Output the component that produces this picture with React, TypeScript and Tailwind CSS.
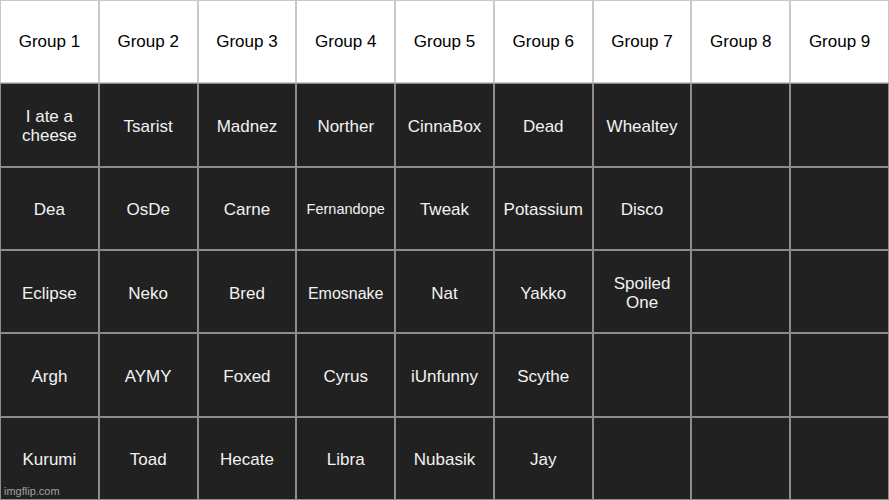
const HEADERS = ["Group 1", "Group 2", "Group 3", "Group 4", "Group 5", "Group 6", "Group 7", "Group 8", "Group 9"];

// cells per row, "" = empty
const ROWS: string[][] = [
  ["I ate a cheese", "Tsarist", "Madnez", "Norther", "CinnaBox", "Dead", "Whealtey", "", ""],
  ["Dea", "OsDe", "Carne", "Fernandope", "Tweak", "Potassium", "Disco", "", ""],
  ["Eclipse", "Neko", "Bred", "Emosnake", "Nat", "Yakko", "Spoiled One", "", ""],
  ["Argh", "AYMY", "Foxed", "Cyrus", "iUnfunny", "Scythe", "", "", ""],
  ["Kurumi", "Toad", "Hecate", "Libra", "Nubasik", "Jay", "", "", ""],
];

function sizeFor(name: string) {
  if (name === "Fernandope") return "text-[14.5px]";
  if (name === "Emosnake") return "text-[16px]";
  return "text-[17px]";
}

export default function App() {
  return (
    <div className="relative w-[889px] h-[500px] overflow-hidden bg-[#8c8c8c] p-[1px] font-['Liberation_Sans',Arial,sans-serif]">
      <div className="grid h-full grid-cols-9 grid-rows-6 gap-[2px]">
        {HEADERS.map(h => (
          <div key={h} className="flex items-center justify-center bg-white text-[17px] text-black shadow-[0_0_0_1px_#c8c8c8]">
            {h}
          </div>
        ))}
        {ROWS.flatMap((row, r) =>
          row.map((name, c) => (
            <div
              key={`${r}-${c}`}
              className={`flex items-center justify-center bg-[#212121] px-1 pt-[3px] text-center leading-[19px] text-[#f2f2f2] ${sizeFor(name)}`}
            >
              {name}
            </div>
          ))
        )}
      </div>
      <div className="absolute left-[4px] bottom-[3px] text-[11px] leading-none text-[#c4c4c4]/80">imgflip.com</div>
    </div>
  );
}
